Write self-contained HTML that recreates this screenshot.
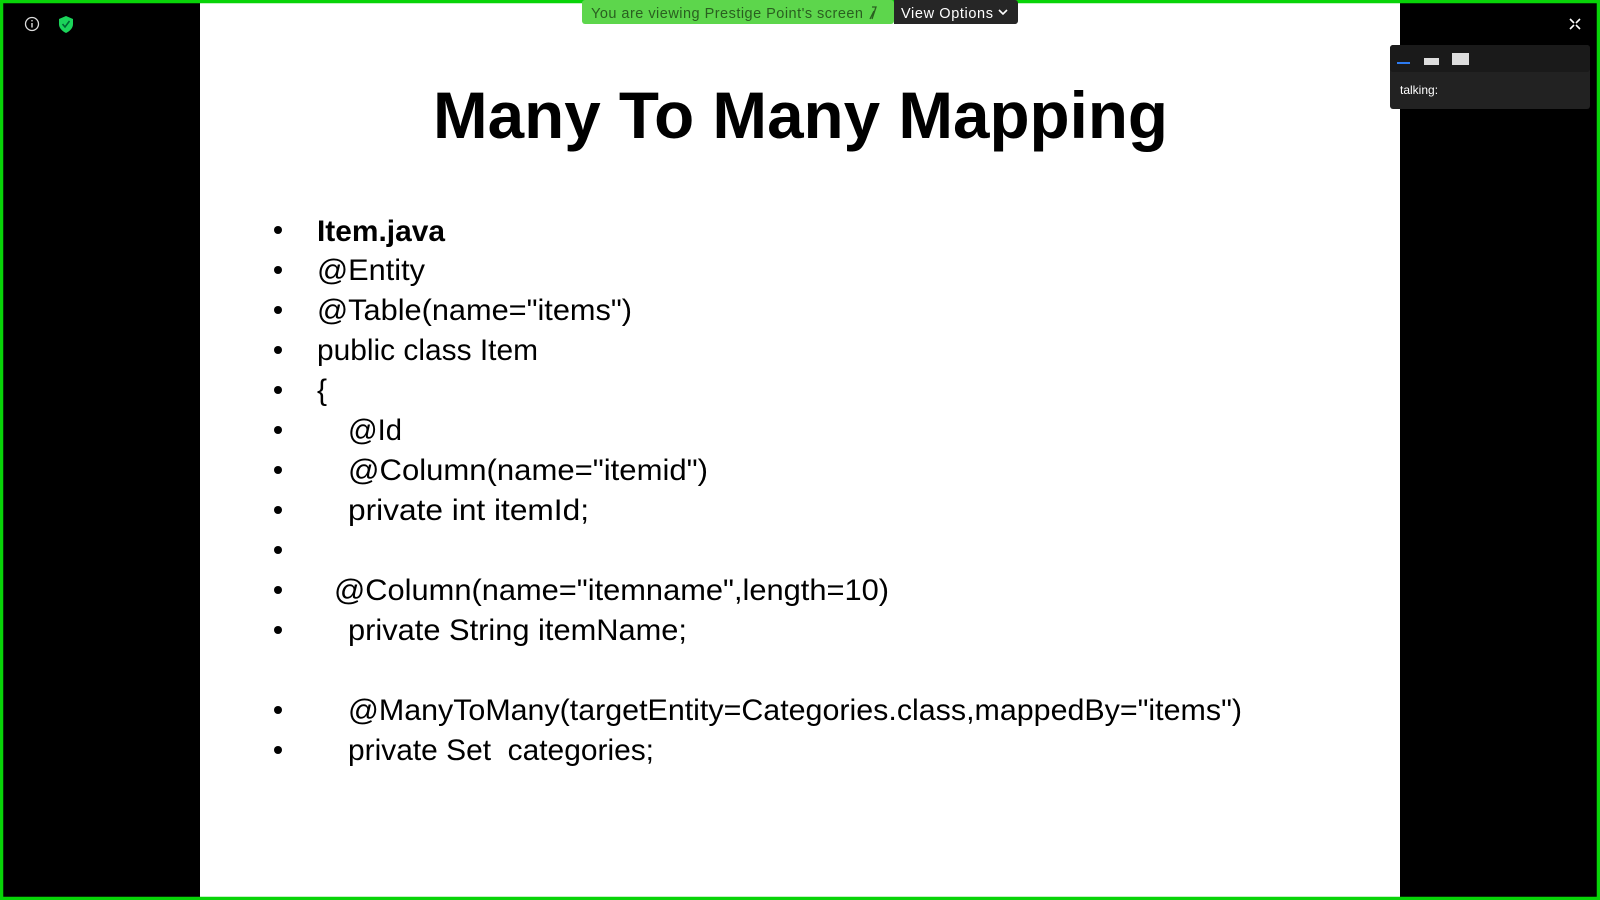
<!DOCTYPE html>
<html><head><meta charset="utf-8"><style>
html,body{margin:0;padding:0;background:#000;width:1600px;height:900px;overflow:hidden}
svg{display:block}
</style></head><body>
<svg width="1600" height="900" viewBox="0 0 1600 900" xmlns="http://www.w3.org/2000/svg" font-family="Liberation Sans, sans-serif">
<rect x="0" y="0" width="1600" height="900" fill="#000"/>
<rect x="200" y="3" width="1200" height="894" fill="#fff"/>
<rect x="1.5" y="1.5" width="1597" height="897" fill="none" stroke="#08d408" stroke-width="3.5"/>
<rect x="582" y="0" width="312" height="24" rx="3" fill="#5dd64c"/>
<rect x="894" y="0" width="124" height="24" rx="3" fill="#262626"/>
<rect x="894" y="0" width="10" height="24" fill="#262626"/>
<text x="591" y="18" font-size="14.5" fill="#2a5f20" textLength="272">You are viewing Prestige Point's screen</text>
<path d="M872 7 L876 7 L872 19 M870 19 L874 11" stroke="#2a5f20" stroke-width="1.3" fill="none"/>
<text x="901" y="18" font-size="14.5" fill="#fff" textLength="92">View Options</text>
<path d="M999 10 L1003 14 L1007 10" stroke="#fff" stroke-width="1.6" fill="none"/>
<circle cx="32" cy="24" r="6.5" fill="none" stroke="#ddd" stroke-width="1.3"/>
<rect x="31.3" y="23" width="1.4" height="4.5" fill="#ddd"/><rect x="31.3" y="20" width="1.4" height="1.4" fill="#ddd"/>
<path d="M66 16 L73 19 L73 24 C73 28 70 31 66 33 C62 31 59 28 59 24 L59 19 Z" fill="#1bd45a"/>
<path d="M62.5 24 L65 27 L69.5 21" stroke="#063" stroke-width="1.6" fill="none"/>
<path d="M1570 19 L1574 23 M1580 19 L1576 23 M1570 29 L1574 25 M1580 29 L1576 25" stroke="#fff" stroke-width="1.6"/>
<rect x="1390" y="45" width="200" height="64" rx="3" fill="#222"/>
<rect x="1390" y="45" width="200" height="27" rx="3" fill="#1a1a1a"/>
<rect x="1397" y="62" width="13" height="2" fill="#2d7bf0"/>
<rect x="1424" y="58" width="15" height="7" fill="#ddd"/>
<rect x="1452" y="53" width="17" height="12" fill="#ddd"/>
<text x="1400" y="94" font-size="12" fill="#fff">talking:</text>
<text x="433" y="138" font-size="66" font-weight="bold" fill="#000" textLength="735" lengthAdjust="spacingAndGlyphs">Many To Many Mapping</text>
<g font-size="30" fill="#000">
<g>
<circle cx="278" cy="230" r="4"/><circle cx="278" cy="270" r="4"/><circle cx="278" cy="310" r="4"/><circle cx="278" cy="350" r="4"/><circle cx="278" cy="390" r="4"/><circle cx="278" cy="430" r="4"/><circle cx="278" cy="470" r="4"/><circle cx="278" cy="510" r="4"/><circle cx="278" cy="550" r="4"/><circle cx="278" cy="590" r="4"/><circle cx="278" cy="630" r="4"/><circle cx="278" cy="710" r="4"/><circle cx="278" cy="750" r="4"/>
</g>
<text x="317" y="241" font-weight="bold" textLength="128" lengthAdjust="spacingAndGlyphs">Item.java</text>
<text x="317" y="280" textLength="108" lengthAdjust="spacingAndGlyphs">@Entity</text>
<text x="317" y="320" textLength="315" lengthAdjust="spacingAndGlyphs">@Table(name="items")</text>
<text x="317" y="360" textLength="221" lengthAdjust="spacingAndGlyphs">public class Item</text>
<text x="317" y="400">{</text>
<text x="348" y="440" textLength="54" lengthAdjust="spacingAndGlyphs">@Id</text>
<text x="348" y="480" textLength="360" lengthAdjust="spacingAndGlyphs">@Column(name="itemid")</text>
<text x="348" y="520" textLength="241" lengthAdjust="spacingAndGlyphs">private int itemId;</text>
<text x="334" y="600" textLength="555" lengthAdjust="spacingAndGlyphs">@Column(name="itemname",length=10)</text>
<text x="348" y="640" textLength="339" lengthAdjust="spacingAndGlyphs">private String itemName;</text>
<text x="348" y="720" textLength="894" lengthAdjust="spacingAndGlyphs">@ManyToMany(targetEntity=Categories.class,mappedBy="items")</text>
<text x="348" y="760" textLength="306" lengthAdjust="spacingAndGlyphs" xml:space="preserve">private Set  categories;</text>
</g>
</svg>
</body></html>
